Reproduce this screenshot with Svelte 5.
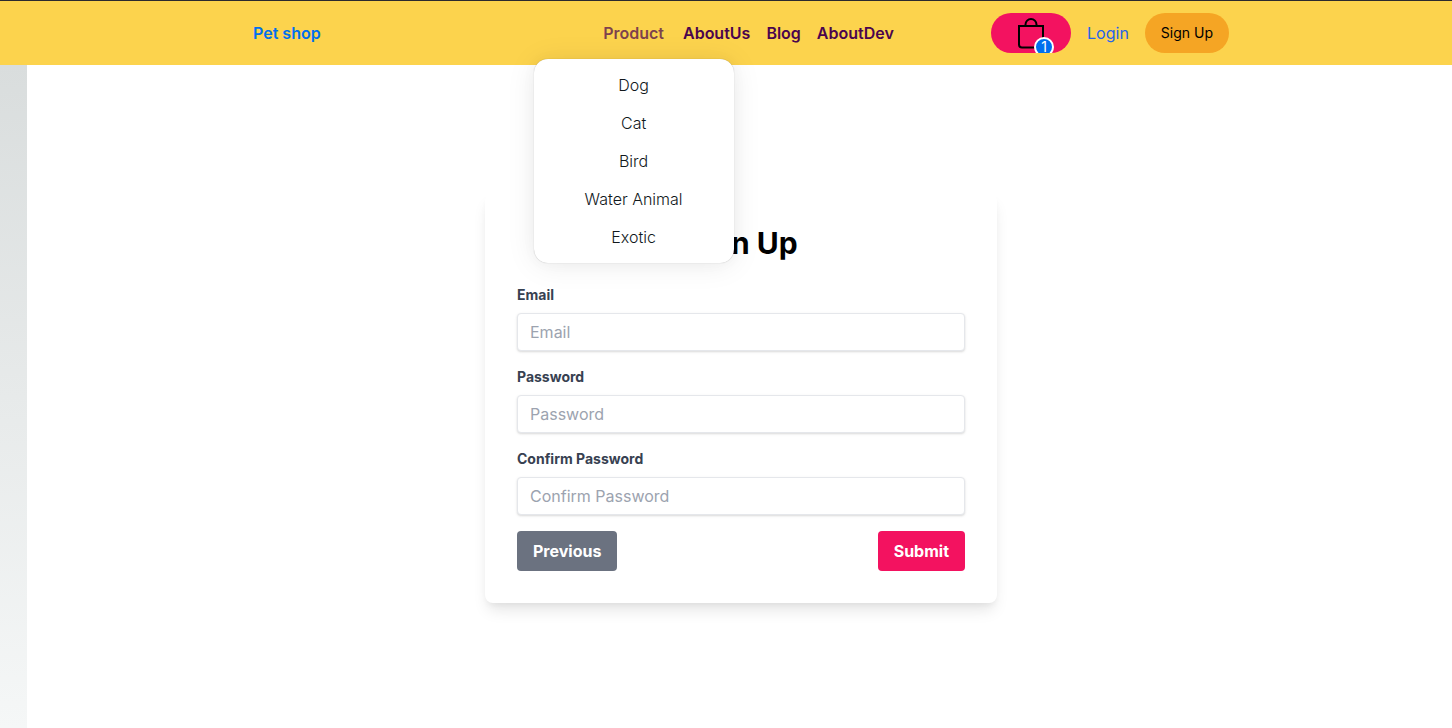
<script>
  const categories = ['Dog', 'Cat', 'Bird', 'Water Animal', 'Exotic'];
  const links = ['AboutUs', 'Blog', 'AboutDev'];
  const fields = [
    { id: 'email', label: 'Email', type: 'email' },
    { id: 'password', label: 'Password', type: 'password' },
    { id: 'confirm', label: 'Confirm Password', type: 'password' }
  ];
  let open = $state(true);
  let cartCount = $state(1);
</script>

<div class="page">
  <header>
    <div class="bar">
      <a class="brand" href="#home">Pet shop</a>
      <nav>
        <div class="product">
          <button class="trigger" class:open aria-expanded={open} onclick={() => (open = !open)}>Product</button>
          {#if open}
            <ul class="menu">
              {#each categories as name}
                <li><a href="#category">{name}</a></li>
              {/each}
            </ul>
          {/if}
        </div>
        {#each links as name}
          <a class="link" href="#{name}">{name}</a>
        {/each}
      </nav>
      <div class="actions">
        <button class="cart" aria-label="Cart">
          <span class="bag">
            <svg width="30" height="34" viewBox="0 0 30 34" fill="none" stroke="#000" stroke-width="2">
              <path d="M3 10H27V28.500Q27 31.500 24 31.500H6Q3 31.500 3 28.500Z" />
              <path d="M9.500 10V8.500a5.500 5.500 0 0 1 11 0V10" />
            </svg>
            <span class="badge">{cartCount}</span>
          </span>
        </button>
        <a class="login" href="#login">Login</a>
        <a class="signup" href="#signup">Sign Up</a>
      </div>
    </div>
  </header>
  <div class="body">
    <aside></aside>
    <main>
      <form onsubmit={(e) => e.preventDefault()}>
        <h1>Sign Up</h1>
        {#each fields as field}
          <div class="field">
            <label for={field.id}>{field.label}</label>
            <input id={field.id} type={field.type} placeholder={field.label} />
          </div>
        {/each}
        <div class="buttons">
          <button type="button" class="previous">Previous</button>
          <button type="submit" class="submit">Submit</button>
        </div>
      </form>
    </main>
  </div>
</div>

<style>
  :global(body) { margin: 0; background: #fff; }
  .page {
    display: flex;
    flex-direction: column;
    box-sizing: border-box;
    min-height: 100vh;
    border-top: 1px solid #2b2a2e;
    font-family: Inter, sans-serif;
    font-size: 16px;
    line-height: 24px;
    color: #11181c;
  }
  a { text-decoration: none; color: inherit; }
  button { border: 0; padding: 0; font: inherit; cursor: pointer; }
  header { background: #fcd34d; padding-left: 30px; position: relative; z-index: 2; }
  .bar {
    display: flex;
    align-items: center;
    height: 64px;
    max-width: 976px;
    margin: 0 auto;
  }
  .brand { flex: 1 1 0; color: #006fee; font-weight: 600; }
  nav { display: flex; align-items: center; gap: 16px; padding-left: 12px; }
  .product { position: relative; }
  .trigger { padding: 0 3px; background: none; color: #4a044e; font-weight: 600; }
  .trigger.open { opacity: .7; }
  .link { color: #4a044e; font-weight: 600; }
  .menu {
    position: absolute;
    top: 38px;
    left: 50%;
    transform: translateX(-50%);
    box-sizing: border-box;
    width: 200px;
    margin: 0;
    padding: 8px;
    list-style: none;
    text-align: center;
    background: #fff;
    border-radius: 14px;
    box-shadow: 0 0 15px rgba(0, 0, 0, .03), 0 2px 30px rgba(0, 0, 0, .08), 0 0 1px rgba(0, 0, 0, .3);
  }
  .menu li { padding: 6px 8px; font-weight: 300; }
  .menu li + li { margin-top: 2px; }
  .menu a { display: block; }
  .actions { flex: 1 1 0; display: flex; justify-content: flex-end; align-items: center; gap: 16px; }
  .cart {
    display: flex;
    justify-content: center;
    width: 80px;
    height: 40px;
    border-radius: 20px;
    background: #f31260;
    overflow: hidden;
  }
  .bag { position: relative; display: block; width: 30px; margin-top: 3px; }
  .bag svg { display: block; }
  .badge {
    position: absolute;
    right: -8px;
    top: 21px;
    box-sizing: border-box;
    width: 20px;
    height: 20px;
    border: 2px solid #fff;
    border-radius: 50%;
    background: #006fee;
    color: #fff;
    font-size: 14px;
    line-height: 16px;
    text-align: center;
  }
  .login { color: #2563eb; }
  .signup {
    padding: 0 16px;
    border-radius: 20px;
    background: #f5a524;
    color: #000;
    font-size: 14px;
    line-height: 40px;
  }
  .body { flex: 1; display: flex; }
  aside { width: 27px; background: linear-gradient(#d9dddd, #f5f7f7); }
  main { flex: 1; display: flex; align-items: center; justify-content: center; padding: 3px 0 0 3px; }
  form {
    box-sizing: border-box;
    width: 100%;
    max-width: 512px;
    padding: 32px;
    border-radius: 8px;
    background: #fff;
    box-shadow: 0 10px 15px -3px rgba(0, 0, 0, .1), 0 4px 6px -2px rgba(0, 0, 0, .05);
  }
  h1 { margin: 0 0 24px; font-size: 30px; line-height: 36px; font-weight: 700; text-align: center; color: #000; }
  .field { margin-bottom: 16px; }
  label { display: block; margin-bottom: 8px; font-size: 14px; line-height: 20px; font-weight: 700; color: #374151; }
  input {
    display: block;
    box-sizing: border-box;
    width: 100%;
    height: 38px;
    padding: 8px 12px;
    border: 1px solid #e5e7eb;
    border-radius: 4px;
    background: #fff;
    box-shadow: 0 1px 3px rgba(0, 0, 0, .1), 0 1px 2px rgba(0, 0, 0, .06);
    font: inherit;
    line-height: 20px;
    color: #374151;
  }
  input::placeholder { color: #9ca3af; opacity: 1; }
  .buttons { display: flex; justify-content: space-between; }
  .buttons button { padding: 8px 16px; border-radius: 4px; color: #fff; font-weight: 700; }
  .previous { background: #6b7280; }
  .submit { background: #f31260; }
</style>
